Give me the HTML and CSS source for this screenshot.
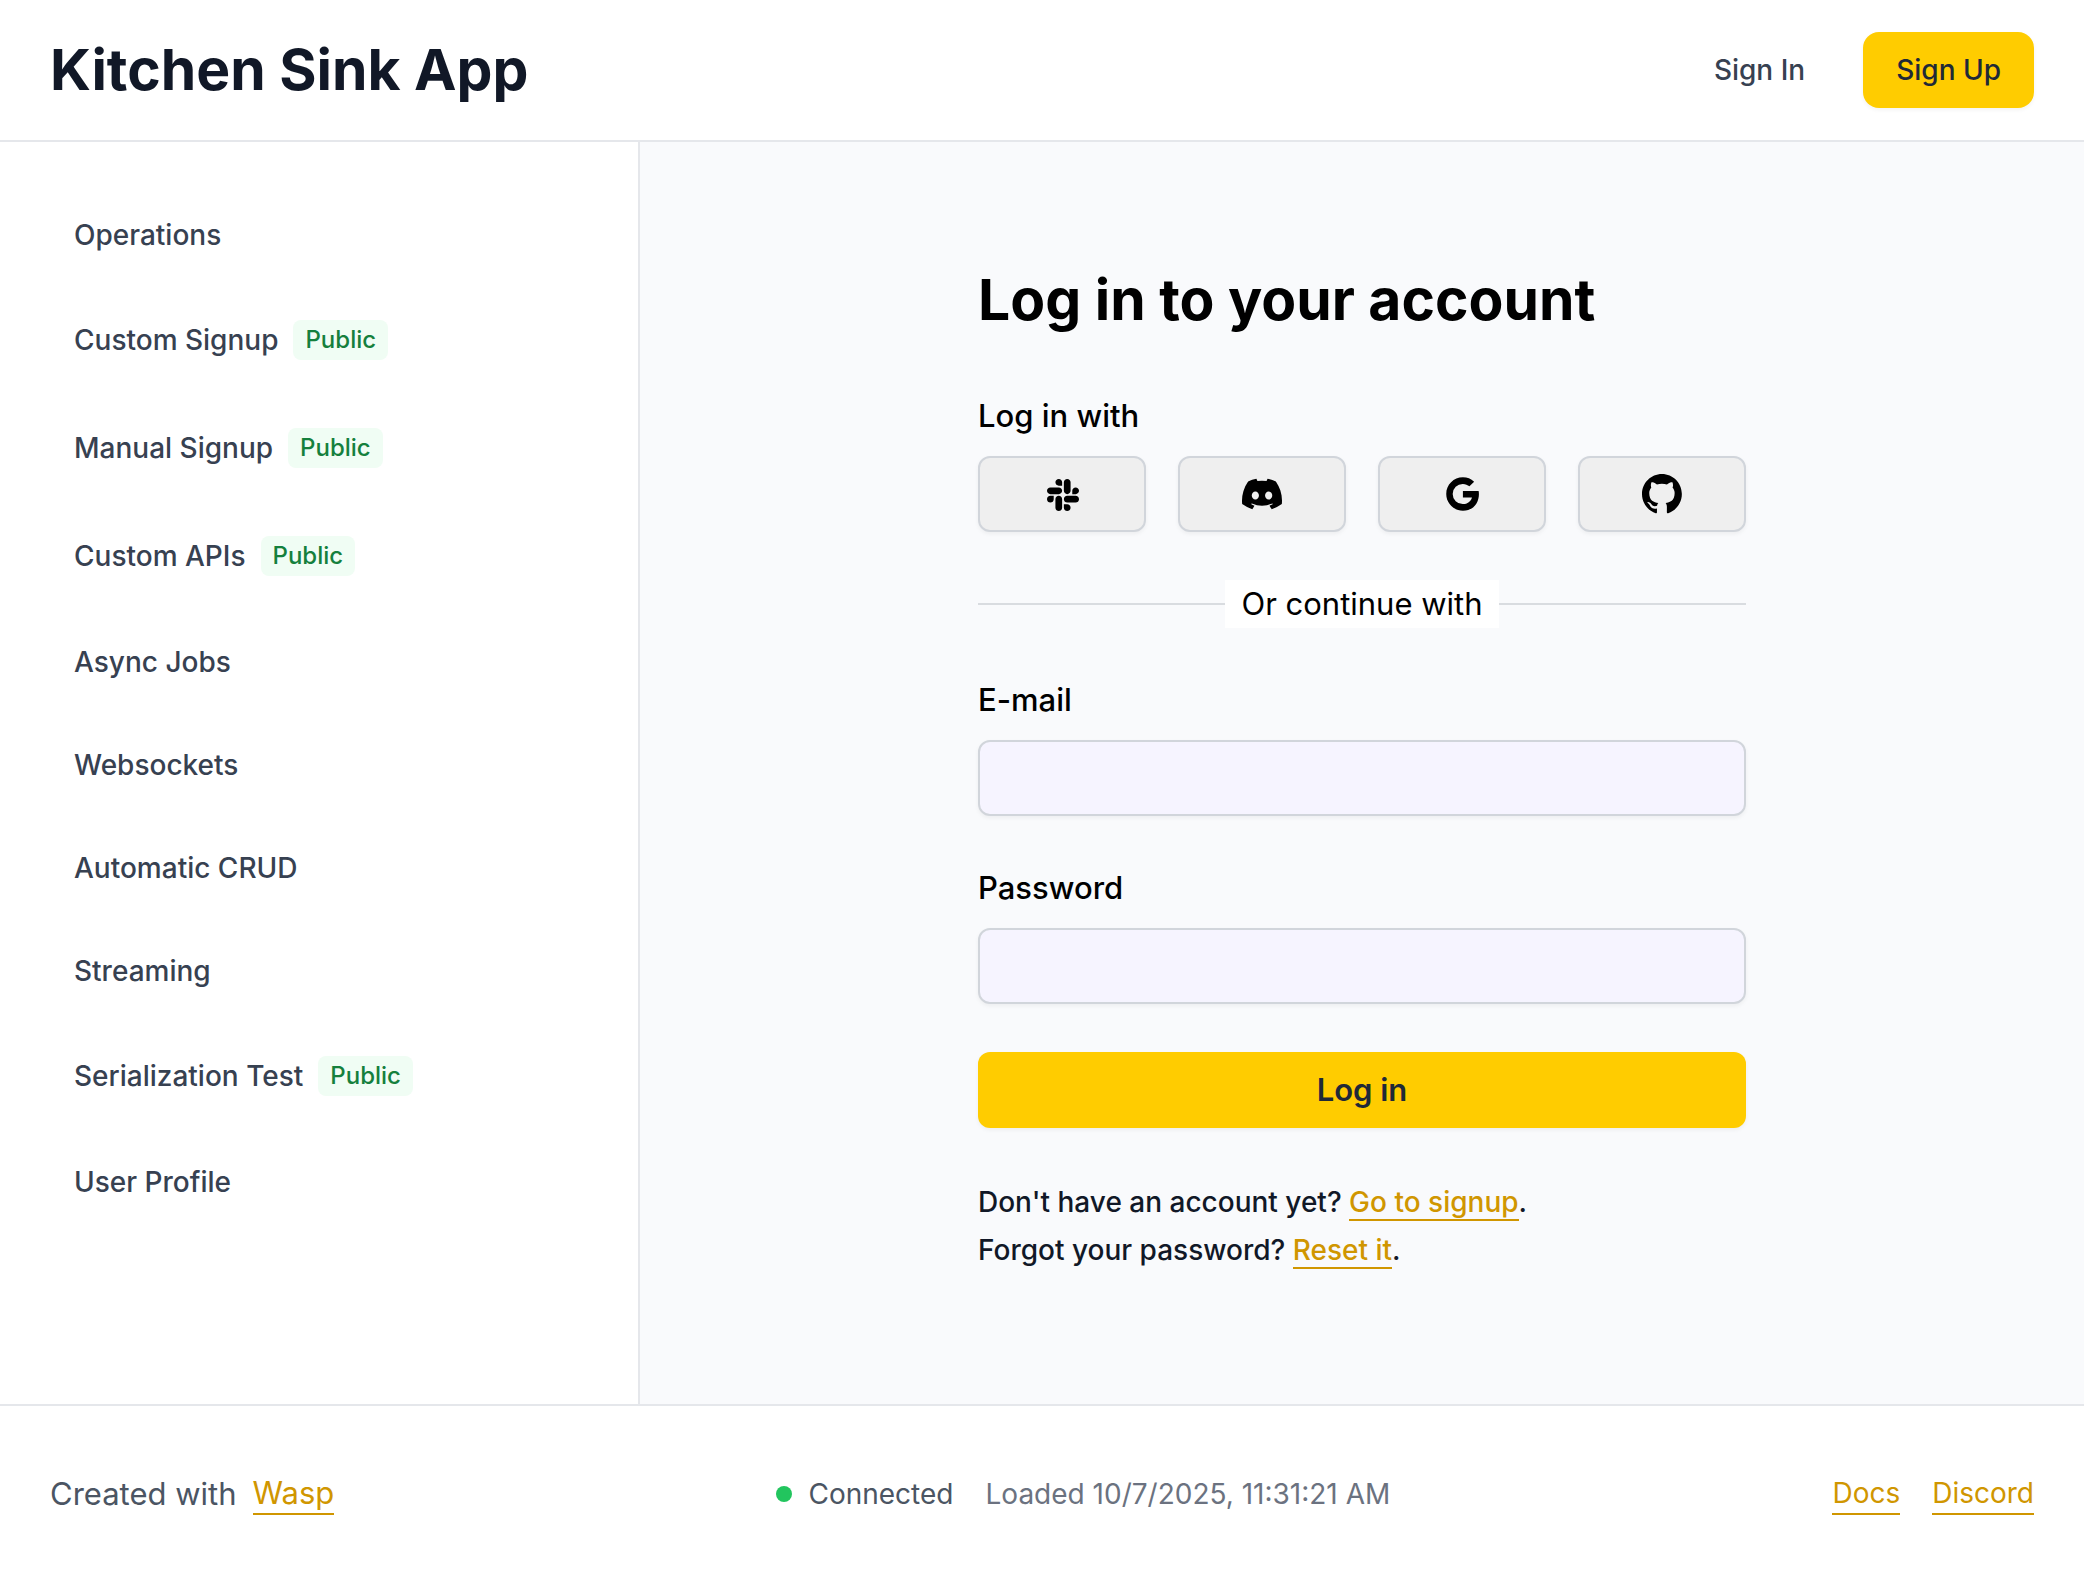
FILE: index.html
```html
<!DOCTYPE html>
<html lang="en">
<head>
  <meta charset="utf-8">
  <meta name="viewport" content="width=device-width, initial-scale=1">
  <title>Kitchen Sink App</title>
  <link rel="stylesheet" href="styles.css">
</head>
<body>
  <header class="header">
    <h1 class="title">Kitchen Sink App</h1>
    <nav class="account">
      <a class="signin" href="#">Sign In</a>
      <a class="signup" href="#">Sign Up</a>
    </nav>
  </header>

  <div class="body">
    <aside class="sidebar">
      <nav class="menu">
        <a class="item" href="#">Operations</a>
        <a class="item item-tagged" href="#">Custom Signup <span class="badge">Public</span></a>
        <a class="item item-tagged" href="#">Manual Signup <span class="badge">Public</span></a>
        <a class="item item-tagged" href="#">Custom APIs <span class="badge">Public</span></a>
        <a class="item" href="#">Async Jobs</a>
        <a class="item" href="#">Websockets</a>
        <a class="item" href="#">Automatic CRUD</a>
        <a class="item" href="#">Streaming</a>
        <a class="item item-tagged" href="#">Serialization Test <span class="badge">Public</span></a>
        <a class="item" href="#">User Profile</a>
      </nav>
    </aside>

    <main class="main">
      <div class="auth">
        <h2 class="heading">Log in to your account</h2>
        <section class="field">
          <span class="label" id="social-label">Log in with</span>
          <div class="social" role="group" aria-labelledby="social-label">
            <button class="provider" type="button" aria-label="Slack">
              <svg class="icon" viewBox="-70 -38 560 560" fill="currentColor"><path d="M94.12 315.1c0 25.9-21.16 47.06-47.06 47.06S0 341 0 315.1c0-25.9 21.16-47.06 47.06-47.06h47.06v47.06zm23.72 0c0-25.9 21.16-47.06 47.06-47.06s47.06 21.16 47.06 47.06v117.84c0 25.9-21.16 47.06-47.06 47.06s-47.06-21.16-47.06-47.06V315.1zm47.06-188.98c-25.9 0-47.06-21.16-47.06-47.06S139 32 164.9 32s47.06 21.16 47.06 47.06v47.06H164.9zm0 23.72c25.9 0 47.06 21.16 47.06 47.06s-21.16 47.06-47.06 47.06H47.06C21.16 243.96 0 222.8 0 196.9s21.16-47.06 47.06-47.06H164.9zm188.98 47.06c0-25.9 21.16-47.06 47.06-47.06 25.9 0 47.06 21.16 47.06 47.06s-21.16 47.06-47.06 47.06h-47.06V196.9zm-23.72 0c0 25.9-21.16 47.06-47.06 47.06-25.9 0-47.06-21.16-47.06-47.06V79.06c0-25.9 21.16-47.06 47.06-47.06 25.9 0 47.06 21.16 47.06 47.06V196.9zM283.1 385.88c25.9 0 47.06 21.16 47.06 47.06 0 25.9-21.16 47.06-47.06 47.06-25.9 0-47.06-21.16-47.06-47.06v-47.06h47.06zm0-23.72c-25.9 0-47.06-21.16-47.06-47.06 0-25.9 21.16-47.06 47.06-47.06h117.84c25.9 0 47.06 21.16 47.06 47.06 0 25.9-21.16 47.06-47.06 47.06H283.1z"/></svg>
            </button>
            <button class="provider" type="button" aria-label="Discord">
              <svg class="icon" viewBox="0 0 127.14 96.36" fill="currentColor"><path d="M107.7,8.07A105.15,105.15,0,0,0,81.47,0a72.06,72.06,0,0,0-3.36,6.83A97.68,97.68,0,0,0,49,6.83,72.37,72.37,0,0,0,45.64,0,105.89,105.89,0,0,0,19.39,8.09C2.79,32.65-1.71,56.6.54,80.21h0A105.73,105.73,0,0,0,32.71,96.36,77.7,77.7,0,0,0,39.6,85.25a68.42,68.42,0,0,1-10.85-5.18c.91-.66,1.8-1.34,2.66-2a75.57,75.57,0,0,0,64.32,0c.87.71,1.76,1.39,2.66,2a68.68,68.68,0,0,1-10.87,5.19,77,77,0,0,0,6.89,11.1A105.25,105.25,0,0,0,126.6,80.22h0C129.24,52.84,122.09,29.11,107.7,8.07ZM42.45,65.69C36.18,65.69,31,60,31,53s5-12.74,11.43-12.74S54,46,53.89,53,48.84,65.69,42.45,65.69Zm42.24,0C78.41,65.69,73.25,60,73.25,53s5-12.74,11.44-12.74S96.23,46,96.12,53,91.08,65.69,84.69,65.69Z"/></svg>
            </button>
            <button class="provider" type="button" aria-label="Google">
              <svg class="icon" viewBox="0 0 24 24" fill="currentColor"><path d="M12.545 10.239v3.821h5.445c-.712 2.315-2.647 3.972-5.445 3.972a6.033 6.033 0 1 1 0-12.064c1.498 0 2.866.549 3.921 1.453l2.814-2.814A9.969 9.969 0 0 0 12.545 2C7.021 2 2.543 6.477 2.543 12s4.478 10 10.002 10c8.396 0 10.249-7.85 9.426-11.748z"/></svg>
            </button>
            <button class="provider" type="button" aria-label="GitHub">
              <svg class="icon" viewBox="0 0 98 98" fill="currentColor"><path d="M48.854 0C21.839 0 0 22 0 49.217c0 21.756 13.993 40.172 33.405 46.69 2.427.49 3.316-1.059 3.316-2.362 0-1.141-.08-5.052-.08-9.127-13.59 2.934-16.42-5.867-16.42-5.867-2.184-5.704-5.42-7.17-5.42-7.17-4.448-3.015.324-3.015.324-3.015 4.934.326 7.523 5.052 7.523 5.052 4.367 7.496 11.404 5.378 14.235 4.074.404-3.178 1.699-5.378 3.074-6.6-10.839-1.141-22.243-5.378-22.243-24.283 0-5.378 1.94-9.778 5.014-13.2-.485-1.222-2.184-6.275.486-13.038 0 0 4.125-1.304 13.426 5.052a46.97 46.97 0 0 1 12.214-1.63c4.125 0 8.33.571 12.213 1.63 9.302-6.356 13.427-5.052 13.427-5.052 2.67 6.763.97 11.816.485 13.038 3.155 3.422 5.015 7.822 5.015 13.2 0 18.905-11.404 23.06-22.324 24.283 1.78 1.548 3.316 4.481 3.316 9.126 0 6.6-.08 11.897-.08 13.526 0 1.304.89 2.853 3.316 2.364 19.412-6.52 33.405-24.935 33.405-46.691C97.707 22 75.788 0 48.854 0z"/></svg>
            </button>
          </div>
        </section>

        <div class="divider"><span class="divider-text">Or continue with</span></div>

        <form class="form">
          <div class="field">
            <label class="label" for="email">E-mail</label>
            <input class="input" id="email" type="email">
          </div>
          <div class="field">
            <label class="label" for="password">Password</label>
            <input class="input" id="password" type="password">
          </div>
          <button class="submit" type="submit">Log in</button>
        </form>

        <div class="hints">
          <p>Don't have an account yet? <a class="link" href="#">Go to signup</a>.</p>
          <p>Forgot your password? <a class="link" href="#">Reset it</a>.</p>
        </div>
      </div>
    </main>
  </div>

  <footer class="footer">
    <div class="credit">Created with <a class="link" href="#">Wasp</a></div>
    <div class="status">
      <span class="connection"><span class="dot"></span>Connected</span>
      <span class="loaded">Loaded 10/7/2025, 11:31:21 AM</span>
    </div>
    <nav class="links">
      <a class="link" href="#">Docs</a>
      <a class="link" href="#">Discord</a>
    </nav>
  </footer>
</body>
</html>
```
FILE: styles.css
```css
*,
*::before,
*::after {
  box-sizing: border-box;
}

body {
  margin: 0;
  min-height: 100vh;
  display: flex;
  flex-direction: column;
  background: #fff;
  color: #111827;
  font-family: Inter, "Liberation Sans", sans-serif;
  font-size: 28px;
  line-height: 40px;
}

h1,
h2,
p {
  margin: 0;
}

a {
  color: inherit;
  text-decoration: none;
}

button,
input {
  font: inherit;
}

.header {
  display: flex;
  align-items: center;
  justify-content: space-between;
  padding: 32px 50px;
  border-bottom: 2px solid #e5e7eb;
}

.title {
  font-size: 57px;
  line-height: 72px;
  font-weight: 700;
}

.account {
  display: flex;
  align-items: center;
  gap: 58px;
  color: #374151;
  font-weight: 500;
}

.signup {
  padding: 18px 33px;
  border-radius: 16px;
  background: #ffcc00;
  color: #1f2937;
  box-shadow: 0 2px 4px rgba(0, 0, 0, 0.05);
}

.body {
  flex: 1;
  display: flex;
}

.sidebar {
  flex: 0 0 640px;
  padding: 49px 50px;
  border-right: 2px solid #e5e7eb;
}

.menu {
  display: flex;
  flex-direction: column;
  gap: 16px;
}

.item {
  display: flex;
  align-items: center;
  gap: 15px;
  min-height: 87px;
  padding: 0 24px;
  color: #374151;
  font-weight: 500;
}

.item-tagged {
  min-height: 92px;
}

.badge {
  padding: 4px 12px;
  border-radius: 8px;
  background: #f0fdf4;
  color: #15803d;
  font-size: 24px;
  line-height: 32px;
}

.main {
  flex: 1;
  display: flex;
  justify-content: center;
  padding: 122px 48px;
  background: #f9fafc;
}

.auth {
  width: 100%;
  max-width: 768px;
  color: #000;
  font-size: 31px;
  line-height: 48px;
}

.heading {
  margin-bottom: 56px;
  font-size: 57px;
  line-height: 72px;
  font-weight: 700;
}

.field {
  display: flex;
  flex-direction: column;
  gap: 16px;
}

.label {
  font-weight: 500;
}

.social {
  display: grid;
  grid-template-columns: repeat(4, 1fr);
  gap: 32px;
}

.provider {
  display: flex;
  align-items: center;
  justify-content: center;
  height: 76px;
  padding: 0;
  border: 2px solid #d1d5db;
  border-radius: 12px;
  background: #efefef;
  color: #000;
  box-shadow: 0 2px 4px rgba(0, 0, 0, 0.05);
}

.icon {
  width: 40px;
  height: 40px;
}

.divider {
  display: flex;
  align-items: center;
  margin: 48px 0;
}

.divider::before,
.divider::after {
  content: "";
  flex: 1;
  height: 2px;
  background: #d9dce0;
}

.divider-text {
  padding: 0 16px;
  background: #fff;
}

.form {
  display: flex;
  flex-direction: column;
  gap: 48px;
}

.input {
  width: 100%;
  height: 76px;
  padding: 0 24px;
  border: 2px solid #d1d5db;
  border-radius: 12px;
  background: #f6f4ff;
  box-shadow: 0 2px 4px rgba(0, 0, 0, 0.05);
}

.submit {
  height: 76px;
  border: 0;
  border-radius: 12px;
  background: #ffcc00;
  color: #1f2937;
  font-weight: 600;
  box-shadow: 0 2px 4px rgba(0, 0, 0, 0.05);
}

.hints {
  margin-top: 50px;
  color: #111827;
  font-size: 28px;
  font-weight: 500;
}

.link {
  border-bottom: 2px solid #d09600;
  color: #d09600;
}

.footer {
  display: flex;
  align-items: center;
  justify-content: space-between;
  padding: 64px 50px;
  border-top: 2px solid #e5e7eb;
  color: #4b5563;
}

.credit {
  display: flex;
  align-items: center;
  gap: 16px;
  font-size: 31px;
  line-height: 48px;
}

.credit .link,
.links .link {
  line-height: 40px;
}

.status,
.links {
  display: flex;
  align-items: center;
  gap: 32px;
}

.connection {
  display: flex;
  align-items: center;
  gap: 16px;
}

.dot {
  width: 16px;
  height: 16px;
  border-radius: 50%;
  background: #22c55e;
}

.loaded {
  color: #6b7280;
}
```
